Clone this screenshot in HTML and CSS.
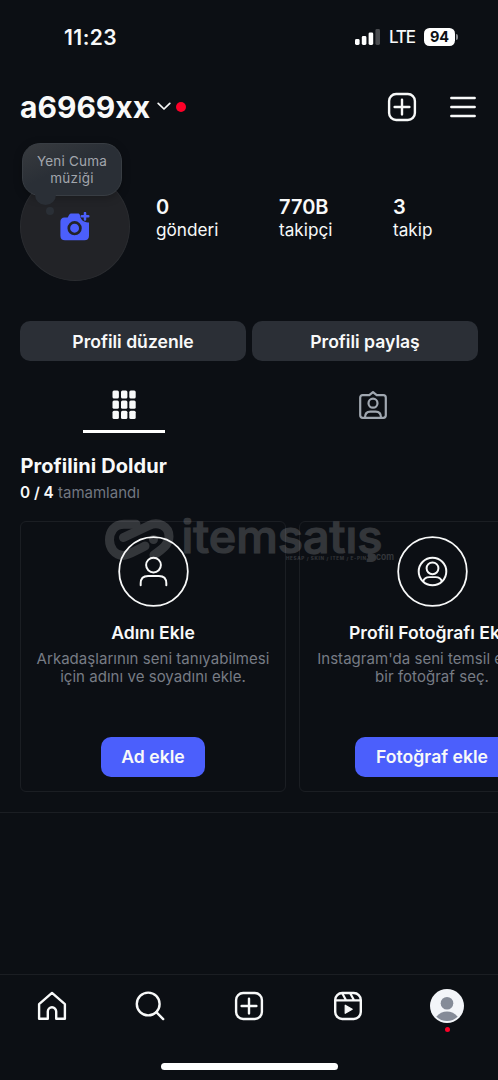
FILE: index.html
```html
<!DOCTYPE html>
<html lang="tr">
<head>
<meta charset="utf-8">
<meta name="viewport" content="width=device-width">
<title>a6969xx</title>
<link rel="stylesheet" href="styles.css">
</head>
<body>
<div class="screen">
  <div class="status">
    <span class="time">11:23</span>
    <div class="status-right">
      <svg class="signal" width="26" height="16" viewBox="0 0 26 16" fill="#fff"><rect x="0" y="10" width="4.6" height="6" rx="1.4"/><rect x="6.8" y="7" width="4.6" height="9" rx="1.4"/><rect x="13.6" y="3.4" width="4.6" height="12.6" rx="1.4"/><rect x="20.4" y="0" width="4.6" height="16" rx="1.4" opacity=".25"/></svg>
      <span class="lte">LTE</span>
      <span class="battery">94</span><span class="battery-tip"></span>
    </div>
  </div>

  <header class="header">
    <h1 class="username">a6969xx</h1>
    <svg class="chevron" width="14" height="9" viewBox="0 0 14 9"><path d="M1.2 1.4 7 7l5.8-5.6" fill="none" stroke="#f8f9f9" stroke-width="1.7" stroke-linecap="round" stroke-linejoin="round"/></svg>
    <span class="dot"></span>
    <svg class="add" width="30" height="30" viewBox="0 0 30 30"><use href="#plus-box"/></svg>
    <svg class="menu" width="26" height="22" viewBox="0 0 26 22"><path d="M1.3 2h23.4M1.3 11h23.4M1.3 20h23.4" stroke="#f8f9f9" stroke-width="2.4" stroke-linecap="round"/></svg>
  </header>

  <section class="profile">
    <div class="avatar">
      <svg class="camera" width="30" height="29" viewBox="0 0 30 29">
        <path d="M4.5 5.4h3.2l1.2-2.2c.6-1.2 1.4-1.8 2.7-1.8h6.1c1.4 0 2 .5 2.2 1.6.5 4.7 3.6 7.2 8.1 7.4l1 .1v13.2c0 3-1.7 4.6-4.6 4.6H5c-3 0-4.6-1.6-4.6-4.6V9.8c0-2.8 1.5-4.4 4.1-4.4z" fill="#4b5ffc"/>
        <circle cx="14.6" cy="16.2" r="5.8" fill="none" stroke="#222327" stroke-width="2.7"/>
        <path d="M25 1v6.500M21.700 4.250h6.600" stroke="#4b5ffc" stroke-width="2.500" stroke-linecap="round"/>
      </svg>
      <div class="note">Yeni Cuma<br>müziği</div>
      <span class="note-tail"></span>
      <span class="note-drop"></span>
    </div>
    <div class="stat s1"><b>0</b><span>gönderi</span></div>
    <div class="stat s2"><b>770B</b><span>takipçi</span></div>
    <div class="stat s3"><b>3</b><span>takip</span></div>
  </section>

  <div class="actions">
    <div class="action">Profili düzenle</div>
    <div class="action">Profili paylaş</div>
  </div>

  <div class="tabs">
    <div class="tab active">
      <svg width="24" height="29" viewBox="0 0 24 29" fill="#f8f9f9"><g id="row"><rect x=".5" y=".4" width="6.400" height="8.200" rx="1.500"/><rect x="9" y=".4" width="6.400" height="8.200" rx="1.500"/><rect x="17.300" y=".4" width="6.400" height="8.200" rx="1.500"/></g><use href="#row" y="10.200"/><use href="#row" y="20.300"/></svg>
    </div>
    <div class="tab">
      <svg width="30" height="30" viewBox="0 0 30 30" fill="none" stroke="#a0a7b0" stroke-width="2.200" stroke-linejoin="round"><path d="M4.700 5.200h6.600L15 2.100l3.700 3.100h6.600c1.500 0 2.500 1 2.500 2.500v17.600c0 1.600-.9 2.500-2.500 2.500H4.700c-1.600 0-2.500-.9-2.500-2.500V7.700c0-1.500.9-2.500 2.500-2.500z"/><circle cx="15" cy="13.200" r="4.500"/><path d="M7 27.500c0-4.100 2-5.900 5.300-5.900h5.400c3.300 0 5.300 1.800 5.300 5.900"/></svg>
    </div>
  </div>

  <h2 class="fill-title">Profilini Doldur</h2>
  <p class="progress"><b>0 / 4</b> <span>tamamlandı</span></p>

  <div class="cards">
    <article class="card">
      <svg class="badge" width="71" height="71" viewBox="0 0 72 72" fill="none" stroke="#f8f9f9"><circle cx="36" cy="36" r="34.800" stroke-width="1.800"/><circle cx="36" cy="29.500" r="7.500" stroke-width="2"/><path d="M23 50v-2c0-5 3-7.500 7.500-7.500h11c4.500 0 7.500 2.500 7.500 7.500v2" stroke-width="2" stroke-linecap="round"/></svg>
      <h3>Adını Ekle</h3>
      <p>Arkadaşlarının seni tanıyabilmesi<br>için adını ve soyadını ekle.</p>
      <div class="cta c1">Ad ekle</div>
    </article>
    <article class="card">
      <svg class="badge" width="71" height="71" viewBox="0 0 72 72" fill="none" stroke="#f8f9f9"><circle cx="36" cy="36" r="34.800" stroke-width="1.800"/><circle cx="36" cy="36" r="14" stroke-width="2"/><circle cx="36" cy="32.800" r="6" stroke-width="2"/><path d="M26.500 46c1-3.200 3.200-4.300 6.300-4.300h6.400c3.100 0 5.300 1.100 6.300 4.300" stroke-width="2"/></svg>
      <h3>Profil Fotoğrafı Ekle</h3>
      <p>Instagram'da seni temsil edecek<br>bir fotoğraf seç.</p>
      <div class="cta c2">Fotoğraf ekle</div>
    </article>
  </div>

  <nav class="nav">
    <svg width="30" height="30" viewBox="0 0 30 30" fill="none" stroke="#f8f9f9" stroke-width="2.400" stroke-linejoin="round"><path d="M2.100 13.200 15 1.900l12.900 11.300v14.600h-8.700v-7.300a4.200 4.200 0 0 0-8.400 0v7.300H2.100z"/></svg>
    <svg width="30" height="30" viewBox="0 0 30 30" fill="none" stroke="#f8f9f9" stroke-width="2.400" stroke-linecap="round"><circle cx="13.200" cy="13" r="11.400"/><path d="m21.300 21.200 6.900 6.900"/></svg>
    <svg width="30" height="30" viewBox="0 0 30 30"><g id="plus-box" fill="none" stroke="#f8f9f9" stroke-width="2.400" stroke-linecap="round"><rect x="2.100" y="2" width="25.800" height="26" rx="7"/><path d="M15 7.600v14.800M7.600 15h14.800"/></g></svg>
    <svg width="30" height="30" viewBox="0 0 30 30" fill="none" stroke="#f8f9f9" stroke-width="2.400"><rect x="2.200" y="2" width="25.600" height="26" rx="7"/><path d="M2.500 9.300h25M9.400 2.400l3.500 6.600M17.200 2.200 20.900 9" stroke-width="2.200"/><path d="M12.200 14.200v8.100l7-4z" fill="#f8f9f9" stroke-width="1.200" stroke-linejoin="round"/></svg>
    <div class="me">
      <svg width="34" height="34" viewBox="0 0 34 34"><circle cx="17" cy="17" r="17" fill="#f3f5f9"/><circle cx="17" cy="14.300" r="6.300" fill="#858b98"/><path d="M6.300 27.800c5.500-7.200 15.900-7.200 21.400 0A15.500 15.500 0 0 1 6.300 27.800z" fill="#858b98"/></svg>
      <span class="me-dot"></span>
    </div>
  </nav>
  <div class="home-bar"></div>

  <svg class="watermark" width="294" height="48" viewBox="0 0 294 48">
    <g fill="none" stroke="#fff" stroke-width="9" stroke-linecap="round" stroke-linejoin="round">
      <path d="M32 7.300H20C10 7.300 5.500 15 5.500 23S11 38.500 19 38.500c5 0 9-3 22-9.500"/>
      <path d="M19.500 20.500 45 8.500C54 4 65 9 65 19.500c0 8-7 13-15 18.500"/>
    </g>
    <circle cx="49.500" cy="22.500" r="4.500" fill="#fff"/>
    <g fill="#fff" font-family="Inter, sans-serif">
      <text x="77.500" y="36" font-size="45" font-weight="500" stroke="#fff" stroke-width="1.200" textLength="201" lengthAdjust="spacingAndGlyphs">itemsatış</text>
      <text x="182" y="43" font-size="4.600" font-weight="700" textLength="80">HESAP / SKIN / ITEM / E-PIN</text>
      <circle cx="267.600" cy="40" r="3.600"/>
      <text x="272" y="43" font-size="9.500" font-weight="600" textLength="18" lengthAdjust="spacingAndGlyphs">com</text>
    </g>
  </svg>
</div>
</body>
</html>
```
FILE: styles.css
```css
* { box-sizing: border-box; }
body {
  margin: 0;
  background: #0c0f14;
  color: #f8f9f9;
  font-family: Inter, "Noto Sans", sans-serif;
}
h1, h2, h3, p { margin: 0; }
svg { display: block; flex: none; }
.screen {
  position: relative;
  width: 498px;
  height: 1080px;
  overflow: hidden;
  display: flex;
  flex-direction: column;
}

.status {
  height: 74px;
  flex: none;
  display: flex;
  align-items: center;
  justify-content: space-between;
  padding: 0 40px 0 64px;
}
.time { font-size: 21px; font-weight: 600; letter-spacing: .45px; }
.status-right { display: flex; align-items: center; }
.lte { font-size: 17px; font-weight: 500; margin-left: 8px; width: 26px; letter-spacing: -1.2px; }
.battery {
  margin-left: 9px;
  width: 31px;
  height: 18px;
  border-radius: 5.5px;
  background: #fff;
  color: #0c0f14;
  font-size: 14.5px;
  font-weight: 700;
  line-height: 18px;
  text-align: center;
}
.battery-tip { width: 2px; height: 6px; margin-left: 1px; border-radius: 0 3px 3px 0; background: #8a8c90; }

.header {
  height: 65px;
  flex: none;
  display: flex;
  align-items: center;
  padding: 0 22px 0 20px;
}
.username { font-size: 30px; font-weight: 700; line-height: 36px; width: 130px; }
.chevron { margin-left: 7px; }
.dot { width: 10px; height: 10px; margin-left: 5px; border-radius: 50%; background: #ff0028; }
.add { margin-left: auto; }
.menu { margin-left: 33px; }

.profile { height: 182px; flex: none; display: flex; padding: 33px 0 0 20px; }
.avatar {
  position: relative;
  width: 110px;
  height: 109px;
  border: 1px solid #2a2c30;
  border-radius: 50%;
  background: #222327;
}
.camera { position: absolute; left: 39px; top: 39px; }
.note {
  position: absolute;
  left: 1px;
  top: -30px;
  width: 100px;
  height: 53px;
  padding-top: 9px;
  border: 1px solid #383d43;
  border-radius: 18px;
  background: linear-gradient(155deg, #383b3f, #2a2f36 45%);
  box-shadow: 0 2px 8px rgba(0, 0, 0, .25);
  color: #a2a6ad;
  font-size: 13.5px;
  line-height: 16.5px;
  letter-spacing: .2px;
  text-align: center;
}
.note-tail {
  position: absolute;
  left: 14px;
  top: 14px;
  width: 21px;
  height: 18px;
  border-radius: 0 0 11px 11px;
  background: #2a2f36;
}
.note-drop { position: absolute; left: 25px; top: 34px; width: 8px; height: 8px; border-radius: 50%; background: #2a2f36; }
.stat { display: flex; flex-direction: column; padding-top: 24px; font-size: 17.2px; line-height: 23px; white-space: nowrap; }
.stat b { font-size: 20px; line-height: 22px; font-weight: 600; }
.s1 { margin-left: 26px; width: 123px; }
.s2 { width: 114px; }

.actions { display: flex; gap: 6px; padding: 0 20px; height: 40px; flex: none; }
.action {
  flex: 1;
  border-radius: 10px;
  background: #2b2f36;
  font-size: 17.6px;
  font-weight: 600;
  line-height: 41px;
  text-align: center;
}

.tabs { display: flex; height: 72px; flex: none; padding-top: 6px; }
.tab { flex: 1; height: 66px; display: flex; justify-content: center; padding-top: 23px; }
.active { flex: none; width: 82px; margin: 0 83px; border-bottom: 3px solid #fff; padding-top: 23px; }

.fill-title { flex: none; padding: 20px 20px 0 20.5px; height: 48px; font-size: 20px; line-height: 26px; font-weight: 700; letter-spacing: .08px; }
.progress { height: 40px; flex: none; padding-left: 20px; font-size: 15px; line-height: 24px; color: #727781; }
.progress b { font-size: 15.3px; font-weight: 600; color: #f8f9f9; }

.cards { display: flex; gap: 13px; height: 292px; flex: none; padding-left: 20px; border-bottom: 1px solid #1b1e23; }
.card {
  flex: none;
  width: 266px;
  height: 271px;
  display: flex;
  flex-direction: column;
  align-items: center;
  border: 1px solid #1b1e23;
  border-radius: 6px;
  padding-top: 14px;
  text-align: center;
  white-space: nowrap;
}
.card h3 { margin-top: 14px; font-size: 17.6px; line-height: 24px; font-weight: 600; }
.card p { margin-top: 5px; height: 36px; font-size: 15px; line-height: 18px; letter-spacing: .04px; color: #777c85; }
.cta {
  margin-top: 51px;
  height: 40px;
  border-radius: 10px;
  background: #4b5ffc;
  font-size: 17.6px;
  font-weight: 600;
  line-height: 40px;
}
.c1 { width: 104px; }
.c2 { width: 154px; }

.nav {
  margin-top: 161px;
  height: 88px;
  flex: none;
  display: flex;
  justify-content: space-between;
  padding: 16px 36px 0 36.5px;
  border-top: 1px solid #1b1e23;
}
.me { width: 30px; display: flex; flex-direction: column; align-items: center; margin-top: -2px; gap: 4px; }
.me-dot { width: 5px; height: 5px; border-radius: 50%; background: #ff0028; }
.home-bar { width: 177px; height: 7px; margin: 1px 0 0 161px; flex: none; border-radius: 4px; background: #fff; }

.watermark { position: absolute; left: 104px; top: 517px; opacity: .16; }
```
